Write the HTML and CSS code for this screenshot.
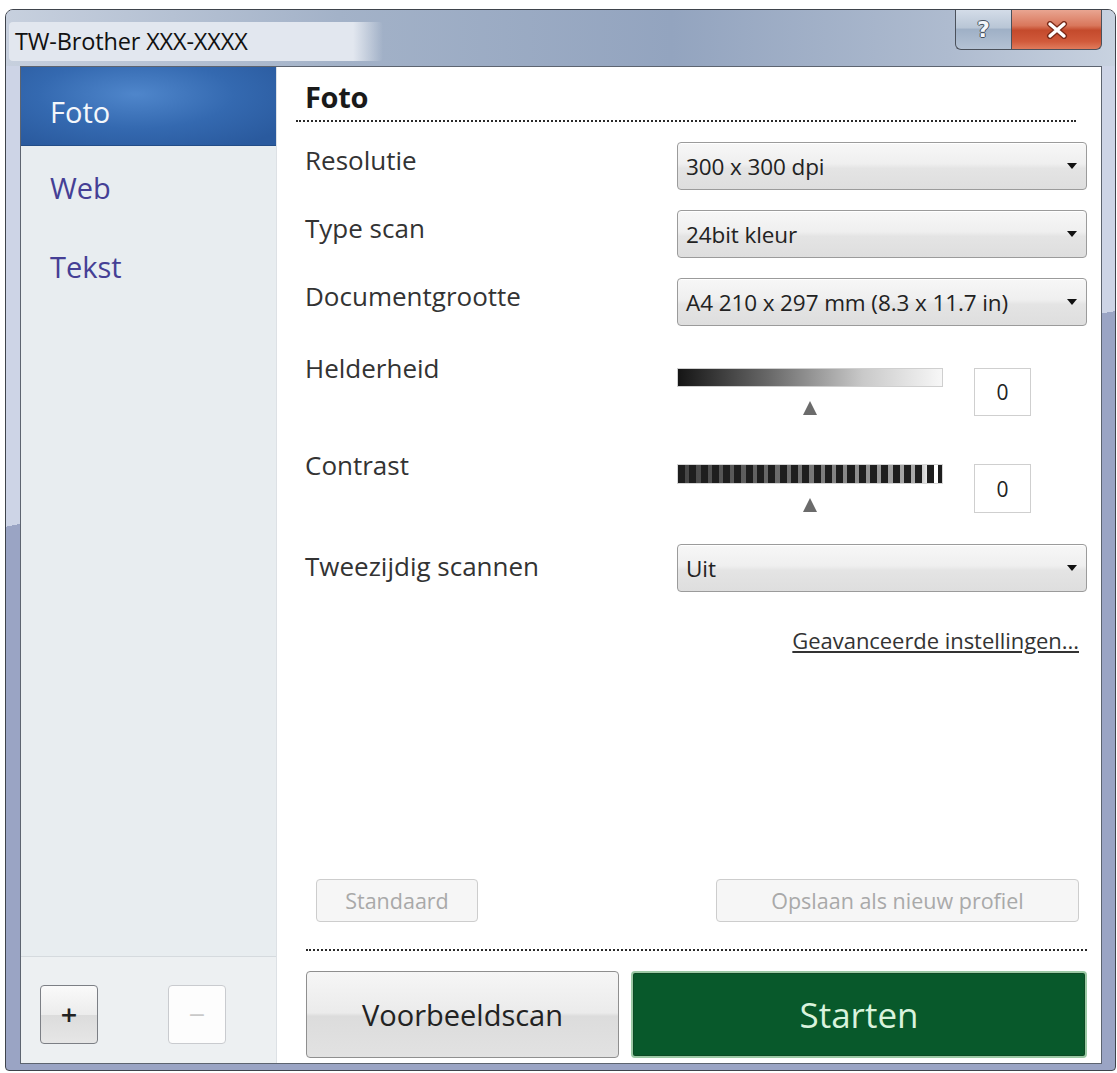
FILE: index.html
```html
<!DOCTYPE html>
<html>
<head>
	<title>TW-Brother XXX-XXXX</title>
	<link rel="stylesheet" href="styles.css">
</head>
<body>

<div class="window">
	<div class="titlebar">
		<span class="title">TW-Brother XXX-XXXX</span>
		<div class="caption">
			<button class="cap help">?</button>
			<button class="cap close">
				<svg width="22" height="18" viewBox="0 0 22 18">
					<path d="M4 3 L18 15 M18 3 L4 15" stroke="#7a2a18" stroke-width="6" stroke-linecap="round"/>
					<path d="M4 3 L18 15 M18 3 L4 15" stroke="#fff" stroke-width="3.4" stroke-linecap="round"/>
				</svg>
			</button>
		</div>
	</div>

	<div class="client">
		<aside class="sidebar">
			<ul class="profiles">
				<li class="active">Foto</li>
				<li>Web</li>
				<li>Tekst</li>
			</ul>
			<div class="profile-tools">
				<button class="tool">+</button>
				<button class="tool" disabled>&minus;</button>
			</div>
		</aside>

		<div class="settings">
			<h2 class="heading">Foto</h2>

			<div class="rows">
				<div class="row">
					<label>Resolutie</label>
					<div class="combo"><span>300 x 300 dpi</span><i class="caret"></i></div>
				</div>
				<div class="row">
					<label>Type scan</label>
					<div class="combo"><span>24bit kleur</span><i class="caret"></i></div>
				</div>
				<div class="row">
					<label>Documentgrootte</label>
					<div class="combo"><span>A4 210 x 297 mm (8.3 x 11.7 in)</span><i class="caret"></i></div>
				</div>
				<div class="row slider-row bright">
					<label>Helderheid</label>
					<div class="slider">
						<div class="track">
							<div class="bar gradient"></div>
							<div class="thumb"></div>
						</div>
						<div class="value">0</div>
					</div>
				</div>
				<div class="row slider-row contrast">
					<label>Contrast</label>
					<div class="slider">
						<div class="track">
							<div class="bar stripes"></div>
							<div class="thumb"></div>
						</div>
						<div class="value">0</div>
					</div>
				</div>
				<div class="row duplex">
					<label>Tweezijdig scannen</label>
					<div class="combo"><span>Uit</span><i class="caret"></i></div>
				</div>
			</div>

			<a class="advanced" href="#">Geavanceerde instellingen...</a>

			<div class="spacer"></div>

			<div class="profile-buttons">
				<button class="plain" disabled>Standaard</button>
				<button class="plain wide" disabled>Opslaan als nieuw profiel</button>
			</div>

			<div class="actions">
				<button class="preview">Voorbeeldscan</button>
				<button class="start">Starten</button>
			</div>
		</div>
	</div>
</div>

</body>
</html>
```

FILE: styles.css
```css
body { margin: 0; background: #fff; font-family: "Open Sans", "Noto Sans", sans-serif; }

/* window frame */
.window { margin: 9px 0 0 5px; width: 1111px; height: 1062px; box-sizing: border-box;
	border: 1px solid #3f444c; border-radius: 8px 8px 4px 4px; padding: 0 13px 6px 14px;
	display: flex; flex-direction: column;
	background: linear-gradient(169deg, #cdd4e6 0 40.5%, #9aa4c4 40.5%); }

.titlebar { height: 56px; display: flex; align-items: flex-start; margin: 0 -13px 0 -14px; padding: 0 13px 0 3px;
	background: linear-gradient(to right, #c7d0de 0%, #a3b2c8 30%, #93a4bf 60%, #aebbcf 85%, #c8d2e0 100%);
	border-radius: 7px 7px 0 0; }
.title { width: 374px; box-sizing: border-box; margin-top: 12px; padding: 3px 0 4px 6px; font-size: 23.5px; color: #111; letter-spacing: -0.15px;
	background: linear-gradient(to right, #e2e7ef 0 92%, rgba(226,231,239,0) 100%); border-radius: 4px; }
.caption { margin-left: auto; display: flex; margin-top: 0; }
.cap { height: 40px; border: 1px solid #4b515b; border-top: none; margin: 0; padding: 0;
	display: flex; align-items: center; justify-content: center; }
.help { width: 56px; border-radius: 0 0 0 6px; border-right: none;
	background: linear-gradient(to bottom, #d3dce8 0%, #b9c6d6 45%, #9fb0c6 50%, #b4c2d4 100%);
	color: #f4f6fa; font: bold 22px "DejaVu Sans", sans-serif;
	text-shadow: 1px 0 0 #46505e, -1px 0 0 #46505e, 0 1px 0 #46505e, 0 -1px 0 #46505e; }
.close { width: 91px; border-radius: 0 0 6px 0;
	background: linear-gradient(to bottom, #e9a591 0%, #d9775c 40%, #c44a2c 52%, #d0593a 80%, #e07b5c 100%); }

.client { flex: 1; display: flex; background: #fff; border: 1px solid #5d6470; min-height: 0; }

/* profile list */
.sidebar { width: 255px; display: flex; flex-direction: column; background: #e8edf0;
	border-right: 1px solid #dde1e5; }
.profiles { list-style: none; margin: 0; padding: 0; flex: 1; }
.profiles li { height: 79px; box-sizing: border-box; padding: 22px 0 0 29px; font-size: 29px; line-height: 40px; color: #453f95; }
.profiles li.active { padding-top: 25px; color: #f4f7fb;
	background: radial-gradient(ellipse 70% 80% at 45% 35%, #4f86cb 0%, #3469b0 55%, #2a5a9e 100%);
	border-bottom: 1px solid #234d87; }
.profile-tools { border-top: 1px solid #d5dade; background: #edf0f2; height: 107px; box-sizing: border-box;
	display: flex; gap: 70px; padding: 28px 0 0 19px; }
.tool { width: 58px; height: 59px; border: 1px solid #7c7f85; border-radius: 4px; padding: 0;
	background: linear-gradient(to bottom, #fafafa 0%, #ececec 50%, #dcdcdc 51%, #e6e6e6 100%);
	font: bold 22px "DejaVu Sans", sans-serif; color: #222; }
.tool:disabled { background: #fdfdfd; border-color: #c9cbcf; color: #c9c9c9; font-weight: normal; }

/* settings panel */
.settings { flex: 1; display: flex; flex-direction: column; padding: 0 14px 5px 19px; }
.heading { margin: 0 11px 0 0; padding: 12px 0 5px 9px; font-size: 29px; line-height: 36px; font-weight: bold; color: #1a1a1a;
	letter-spacing: -0.3px; border-bottom: 2px dotted #2a2a2a; }

.rows { display: flex; flex-direction: column; gap: 20px; margin-top: 20px; padding-left: 9px; }
.row { display: grid; grid-template-columns: 1fr 410px; align-items: start; }
.row label { font-size: 26px; line-height: 36px; color: #333; margin-top: 0; }
.row.bright { margin-top: 6px; }
.row.contrast { margin-top: 13px; }
.row.duplex { margin-top: 11px; }
.row.duplex label { margin-top: 4px; }
.slider-row label { margin-top: -2px; }

.combo { height: 48px; box-sizing: border-box; display: flex; align-items: center; padding: 0 9px 0 8px;
	border: 1px solid #9b9b9b; border-radius: 4px; font-size: 22.5px; color: #222; letter-spacing: -0.1px;
	background: linear-gradient(to bottom, #f7f7f7 0%, #efefef 45%, #e4e4e4 55%, #dedede 100%);
	box-shadow: inset 0 1px 0 #fff; }
.caret { margin-left: auto; width: 0; height: 0; border-left: 5px solid transparent; border-right: 5px solid transparent;
	border-top: 6px solid #111; }

.slider { display: flex; align-items: flex-start; gap: 31px; }
.bright .slider { padding-top: 16px; }
.contrast .slider { padding-top: 15px; }
.track { width: 266px; display: flex; flex-direction: column; align-items: center; gap: 14px; }
.bar { width: 100%; height: 19px; box-sizing: border-box; border: 1px solid #cfcfcf; }
.bar.gradient { background: linear-gradient(to right, #151515 0%, #6a6a6a 35%, #c9c9c9 70%, #f7f7f7 100%); }
.bar.stripes { height: 20px; border-color: #d6d6d6;
	background: repeating-linear-gradient(to right, #1e1e1e 0 7px, transparent 7px 11.3px),
		linear-gradient(to right, #444 0%, #777 50%, #aaa 90%, #fff 96%); }
.thumb { width: 0; height: 0; border-left: 7px solid transparent; border-right: 7px solid transparent;
	border-bottom: 14px solid #6b6b6b; }
.value { width: 57px; height: 48px; box-sizing: border-box; border: 1px solid #cfcfcf; background: #fff;
	display: flex; align-items: center; justify-content: center; font-size: 21px; color: #222; }
.contrast .value { height: 49px; }

.advanced { align-self: flex-end; margin: 33px 8px 0 0; font-size: 22px; color: #333; line-height: 30px;
	letter-spacing: -0.05px; text-decoration: underline; }

.spacer { flex: 1; }

.profile-buttons { display: flex; justify-content: space-between; margin: 0 8px 0 20px; }
.plain { height: 43px; width: 162px; border: 1px solid #cdcdcd; border-radius: 4px; background: #f6f6f6;
	font-family: inherit; font-size: 21.5px; color: #a9a9a9; }
.plain.wide { width: 363px; }

.actions { display: flex; gap: 12px; margin: 27px 0 0 10px; padding-top: 20px; border-top: 2px dotted #2a2a2a; }
.preview { width: 313px; height: 87px; border: 1px solid #8f8f8f; border-radius: 4px; font-family: inherit; font-size: 29px; color: #222;
	background: linear-gradient(to bottom, #f6f6f6 0%, #ebebeb 48%, #dcdcdc 52%, #e2e2e2 100%); }
.start { flex: 1; height: 87px; border: 2px solid #9cc9a5; border-radius: 4px; font-family: inherit; font-size: 35px; color: #d9f3dd;
	background: #08592b; box-shadow: inset 0 0 0 1px #0c4a24; }
```
